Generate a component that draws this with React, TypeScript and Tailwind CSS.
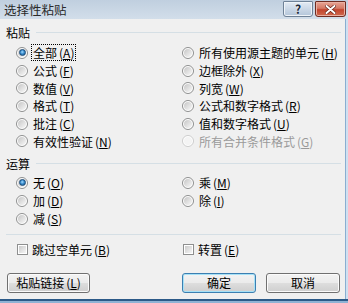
import type { ReactNode } from "react";

const font = "font-['Noto_Sans_CJK_SC','Noto_Sans',sans-serif]";

type Opt = { label: string; key: string; checked?: boolean; disabled?: boolean; focus?: boolean };

const pasteLeft: Opt[] = [
  { label: "全部", key: "A", checked: true, focus: true },
  { label: "公式", key: "F" },
  { label: "数值", key: "V" },
  { label: "格式", key: "T" },
  { label: "批注", key: "C" },
  { label: "有效性验证", key: "N" },
];

const pasteRight: Opt[] = [
  { label: "所有使用源主题的单元", key: "H" },
  { label: "边框除外", key: "X" },
  { label: "列宽", key: "W" },
  { label: "公式和数字格式", key: "R" },
  { label: "值和数字格式", key: "U" },
  { label: "所有合并条件格式", key: "G", disabled: true },
];

const opLeft: Opt[] = [
  { label: "无", key: "O", checked: true },
  { label: "加", key: "D" },
  { label: "减", key: "S" },
];

const opRight: Opt[] = [
  { label: "乘", key: "M" },
  { label: "除", key: "I" },
];

function Mnemonic({ label, k }: { label: string; k: string }) {
  return (
    <>
      {label}
      <span className="ml-[2px]">
        (<u className="underline-offset-[1px]">{k}</u>)
      </span>
    </>
  );
}

function Radio({ checked, disabled }: { checked?: boolean; disabled?: boolean }) {
  return (
    <span
      className={`w-[12px] h-[12px] shrink-0 rounded-full border p-[1px] bg-white ${
        disabled ? "border-[#cdcdcd]" : "border-[#8e8f8f]"
      }`}
    >
      <span
        className={`w-full h-full rounded-full flex items-center justify-center ${
          disabled
            ? "bg-[#f4f4f4]"
            : "bg-gradient-to-br from-[#c6c6c6] to-[#f8f8f8]"
        }`}
      >
        {checked && (
          <span className="w-[7px] h-[7px] rounded-full border border-[#1b4d7d] bg-[radial-gradient(circle_at_45%_40%,#a6dcff_0%,#3b8fd0_45%,#16507f_100%)]" />
        )}
      </span>
    </span>
  );
}

function Checkbox() {
  return (
    <span className="w-[11px] h-[11px] shrink-0 border border-[#8e8f8f] bg-white p-[1px]">
      <span className="block w-full h-full bg-gradient-to-br from-[#cbcbcb] to-[#f6f6f6]" />
    </span>
  );
}

function Option({ opt }: { opt: Opt }) {
  return (
    <div className="flex items-center gap-[5px]">
      <Radio checked={opt.checked} disabled={opt.disabled} />
      <span
        className={`leading-[13px] whitespace-nowrap ${
          opt.disabled ? "text-[#9a9a9a]" : "text-black"
        } ${opt.focus ? "outline outline-1 outline-dotted outline-black -ml-[1px] px-[1px] py-[1px]" : ""}`}
      >
        <Mnemonic label={opt.label} k={opt.key} />
      </span>
    </div>
  );
}

function GroupHeader({ title, className = "" }: { title: string; className?: string }) {
  return (
    <div className={`h-[15px] flex items-center pl-[6px] ${className}`}>
      <span className="leading-[15px]">{title}</span>
      <div className="ml-[6px] flex-1 h-px bg-[#d5dfe5]" />
    </div>
  );
}

function OptionGrid({ left, right, rowClass, className = "" }: { left: Opt[]; right: Opt[]; rowClass: string; className?: string }) {
  const rows = Math.max(left.length, right.length);
  return (
    <div className={`grid grid-cols-[166px_1fr] pl-[16px] ${rowClass} ${className}`}>
      {Array.from({ length: rows }).map((_, i) => (
        <div key={i} className="contents">
          <div className="flex items-center">{left[i] && <Option opt={left[i]} />}</div>
          <div className="flex items-center">{right[i] && <Option opt={right[i]} />}</div>
        </div>
      ))}
    </div>
  );
}

function Button({ children, primary, className = "" }: { children: ReactNode; primary?: boolean; className?: string }) {
  return (
    <button
      type="button"
      className={`h-[20px] rounded-[3px] border flex items-center justify-center leading-[14px] bg-[linear-gradient(#f3f3f3_0%,#ebebeb_48%,#dddddd_52%,#cfcfcf_100%)] ${
        primary
          ? "border-[#3c7fb1] shadow-[inset_0_0_0_1px_#a6e1f7]"
          : "border-[#707070] shadow-[inset_0_0_0_1px_#fbfbfb]"
      } ${className}`}
    >
      {children}
    </button>
  );
}

export default function App() {
  return (
    <div className={`w-[348px] h-[303px] flex flex-col bg-[#f0f0f0] text-[12px] text-black ${font}`}>
      <div className="h-[19px] shrink-0 flex items-start justify-between pl-[4px] pr-[2px] bg-gradient-to-b from-[#c0cfdf] to-[#d2deea]">
        <span className="mt-[2px] text-[12.5px] leading-[15px] text-[#2a2a2a]">选择性粘贴</span>
        <div className="flex gap-[2px] pt-[1px]">
          <div className="w-[30px] h-[16px] rounded-b-[3px] rounded-t-[1px] border border-[#6f8297] bg-gradient-to-b from-[#e3ebf4] to-[#b3c5d9] shadow-[inset_0_0_0_1px_#eef3f8] flex items-center justify-center">
            <span className="text-[12px] leading-none font-bold text-[#1d2b3a] [text-shadow:0_0_2px_#fff]">?</span>
          </div>
          <div className="w-[31px] h-[16px] rounded-b-[3px] rounded-t-[1px] border border-[#6e2c22] bg-[linear-gradient(#e8a595_0%,#d47a66_45%,#c2452e_55%,#cf6a4f_100%)] shadow-[inset_0_0_0_1px_#eab0a2] flex items-center justify-center">
            <svg width="11" height="9" viewBox="0 0 11 9">
              <path d="M1.5 1 L9.5 8 M9.5 1 L1.5 8" stroke="#5a1a10" strokeWidth="3.2" strokeLinecap="round" />
              <path d="M1.5 1 L9.5 8 M9.5 1 L1.5 8" stroke="#ffffff" strokeWidth="2" strokeLinecap="round" />
            </svg>
          </div>
        </div>
      </div>

      <div className="flex flex-1 min-h-0">
        <div className="flex-1 flex flex-col pt-[6px] pr-[4px]">
          <GroupHeader title="粘贴" />
          <OptionGrid left={pasteLeft} right={pasteRight} rowClass="auto-rows-[17.7px]" className="mt-[4px]" />

          <GroupHeader title="运算" className="mt-[6px]" />
          <OptionGrid left={opLeft} right={opRight} rowClass="auto-rows-[18px]" className="mt-[2.5px]" />

          <div className="mt-[6px] ml-[6px] h-px bg-[#d5dfe5]" />

          <div className="mt-[7px] h-[16px] grid grid-cols-[166px_1fr] pl-[17px]">
            <div className="flex items-center gap-[4px]">
              <Checkbox />
              <span className="leading-[13px]">
                <Mnemonic label="跳过空单元" k="B" />
              </span>
            </div>
            <div className="flex items-center gap-[4px]">
              <Checkbox />
              <span className="leading-[13px]">
                <Mnemonic label="转置" k="E" />
              </span>
            </div>
          </div>

          <div className="mt-[15px] flex items-center pl-[7px] pr-[1px]">
            <Button className="w-[83px]">
              <Mnemonic label="粘贴链接" k="L" />
            </Button>
            <div className="flex-1" />
            <Button primary className="w-[74px]">
              确定
            </Button>
            <Button className="w-[74px] ml-[10px]">取消</Button>
          </div>
        </div>
        <div className="w-[3px] border-l border-[#8aaed0] bg-[#cfe0f1]" />
      </div>
      <div className="h-[4px] shrink-0 border-t-2 border-[#2c5a88] bg-[#8fb2d4]" />
    </div>
  );
}
